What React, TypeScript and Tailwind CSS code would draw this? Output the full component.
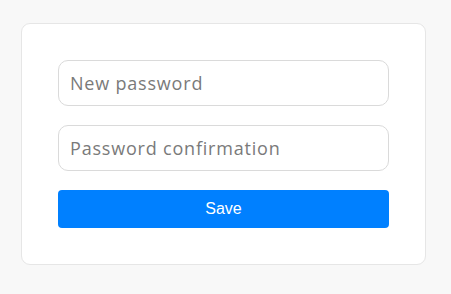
export default function App() {
  return (
    <div className="min-h-screen bg-[#f8f8f8] pl-[21px] pt-[23px]">
      <div className="w-[405px] rounded-[9px] border border-[#e6e6e6] bg-white p-9">
        <form className="flex flex-col gap-[19px]" onSubmit={(e) => e.preventDefault()}>
          <input
            type="password"
            placeholder="New password"
            className="h-[46px] w-full rounded-[10px] border border-[#dadada] px-[11px] text-[18px] tracking-[0.8px] text-[#333] outline-none placeholder:text-[#7a7a7a] [font-family:'Open_Sans',sans-serif]"
          />
          <input
            type="password"
            placeholder="Password confirmation"
            className="h-[46px] w-full rounded-[10px] border border-[#dadada] px-[11px] text-[18px] tracking-[0.8px] text-[#333] outline-none placeholder:text-[#7a7a7a] [font-family:'Open_Sans',sans-serif]"
          />
          <button
            type="submit"
            className="h-[38px] w-full rounded-[4px] bg-[#0080ff] text-[16px] text-white [font-family:'Liberation_Sans',Arial,sans-serif]"
          >
            Save
          </button>
        </form>
      </div>
    </div>
  );
}
